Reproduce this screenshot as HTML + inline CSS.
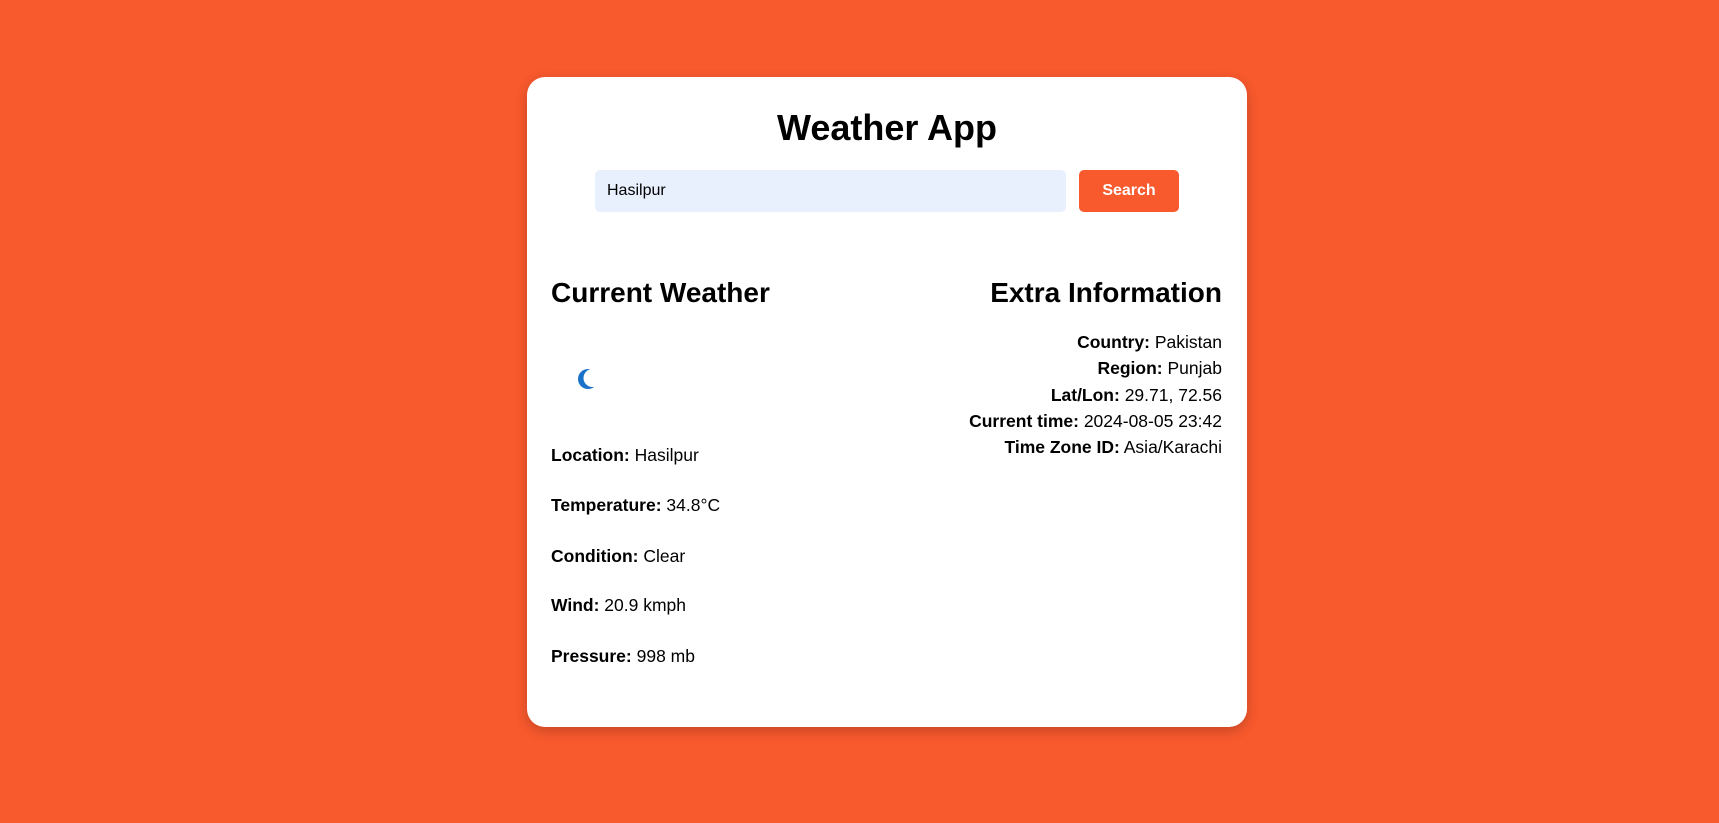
<!DOCTYPE html>
<html><head><meta charset="utf-8"><style>
html,body{margin:0;padding:0;width:1719px;height:823px;background:#F8592D;overflow:hidden;font-family:"Liberation Sans",sans-serif;color:#000}
.card{position:absolute;left:527px;top:77px;width:720px;height:650px;background:#fff;border-radius:18px;box-shadow:0 4px 12px rgba(0,0,0,0.2)}
h1{position:absolute;margin:0;left:0;width:720px;text-align:center;top:30px;font-size:36px;font-weight:bold;line-height:42px}
.inp{position:absolute;left:68px;top:93px;width:471px;height:42px;background:#e8f0fe;border-radius:5px;box-sizing:border-box;padding-left:12px;font-size:16px;line-height:42px}
.btn{position:absolute;left:552px;top:93px;width:100px;height:42px;background:#F8592D;border-radius:5px;color:#fff;font-weight:bold;font-size:16px;text-align:center;line-height:42px}
h2{position:absolute;margin:0;font-size:28px;font-weight:bold;line-height:34px;top:199px}
.l{position:absolute;left:24px;font-size:17.5px;line-height:22px}
.r{position:absolute;right:25px;font-size:17.5px;line-height:26.3px;text-align:right;top:252px}
</style></head><body>
<div class="card">
<h1>Weather App</h1>
<div class="inp">Hasilpur</div>
<div class="btn">Search</div>
<h2 style="left:24px">Current Weather</h2>
<h2 style="right:25px">Extra Information</h2>
<svg style="position:absolute;left:49px;top:289px" width="26" height="26" viewBox="0 0 26 26">
<circle cx="12" cy="13" r="10" fill="#1a73c8"/>
<circle cx="16.5" cy="12" r="9" fill="#fff"/>
</svg>
<div class="l" style="top:367px"><b>Location:</b> Hasilpur</div>
<div class="l" style="top:417px"><b>Temperature:</b> 34.8°C</div>
<div class="l" style="top:468px"><b>Condition:</b> Clear</div>
<div class="l" style="top:517px"><b>Wind:</b> 20.9 kmph</div>
<div class="l" style="top:568px"><b>Pressure:</b> 998 mb</div>
<div class="r"><b>Country:</b> Pakistan<br><b>Region:</b> Punjab<br><b>Lat/Lon:</b> 29.71, 72.56<br><b>Current time:</b> 2024-08-05 23:42<br><b>Time Zone ID:</b> Asia/Karachi</div>
</div>
</body></html>
